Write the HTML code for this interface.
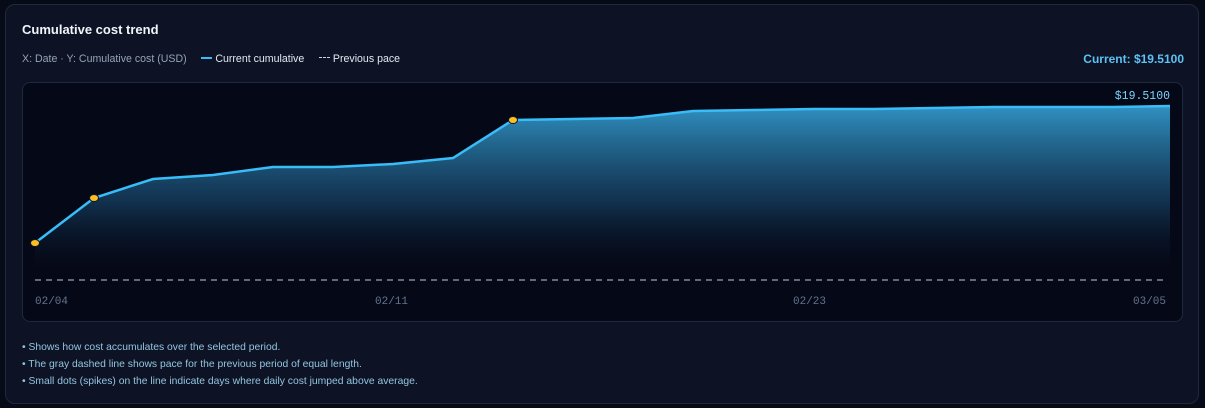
<!DOCTYPE html>
<html><head><meta charset="utf-8"><style>
html,body{margin:0;padding:0;background:#070b18;width:1205px;height:408px;overflow:hidden;font-family:"Liberation Sans",sans-serif}
.card{position:absolute;left:5px;top:4px;width:1192px;height:398px;border:1px solid #1e293b;border-radius:10px;background:#0d1324}
.t{position:absolute;left:16px;top:17px;color:#f1f5f9;font-weight:bold;font-size:13px}
.leg{position:absolute;left:16px;top:48px;color:#94a3b8;font-size:10.6px;white-space:nowrap}
.leg span{color:#e2e8f0}
.cur{position:absolute;right:14px;top:47px;color:#5cc2f5;font-weight:bold;font-size:12px}
.panel{position:absolute;left:22px;top:82px;width:1159px;height:238px;border:1px solid #1e293b;border-radius:8px;background:#050816}
.notes{position:absolute;left:16px;top:334px;color:#93c5e0;font-size:10.35px;line-height:17px}
</style></head><body>
<div class="card">
<div class="t">Cumulative cost trend</div>
<div class="leg">X: Date · Y: Cumulative cost (USD) &nbsp;&nbsp;&nbsp;&nbsp;<b style="display:inline-block;width:11px;height:2px;background:#38bdf8;vertical-align:3px"></b> <span>Current cumulative</span> &nbsp;&nbsp;&nbsp;&nbsp;<b style="display:inline-block;width:11px;border-top:1px dashed #cbd5e1;vertical-align:4px"></b> <span>Previous pace</span></div>
<div class="cur">Current: $19.5100</div>
<div class="notes">• Shows how cost accumulates over the selected period.<br>• The gray dashed line shows pace for the previous period of equal length.<br>• Small dots (spikes) on the line indicate days where daily cost jumped above average.</div>
</div>
<div class="panel"></div>
<svg width="1205" height="408" style="position:absolute;left:0;top:0">
<defs><linearGradient id="g" x1="0" y1="0" x2="0" y2="1"><stop offset="0" stop-color="#38a9e0" stop-opacity=".85"/><stop offset=".55" stop-color="#1a4d74" stop-opacity=".6"/><stop offset="1" stop-color="#050816" stop-opacity="0"/></linearGradient></defs>
<path d="M35,243 L94,198 153,179 213,175 273,167 333,167 393,164 453,158 513,120 573,119 633,118 693,111 753,110 813,109 873,109 933,108 993,107 1053,107 1113,107 1170,106 L1170,280 L35,280Z" fill="url(#g)"/>
<line x1="35" y1="280" x2="1167" y2="280" stroke="#9ca3af" stroke-width="1.3" stroke-dasharray="6,5"/>
<polyline points="35,243 94,198 153,179 213,175 273,167 333,167 393,164 453,158 513,120 573,119 633,118 693,111 753,110 813,109 873,109 933,108 993,107 1053,107 1113,107 1170,106" fill="none" stroke="#38bdf8" stroke-width="2.5"/>
<g fill="#fbbf24" stroke="#0f172a" stroke-width="1"><ellipse cx="35" cy="243" rx="4.5" ry="3.5"/><ellipse cx="94" cy="198" rx="4.5" ry="3.5"/><ellipse cx="513" cy="120" rx="4.5" ry="3.5"/></g>
<g font-family="Liberation Mono,monospace" font-size="11" fill="#64748b"><text x="35" y="304">02/04</text><text x="375" y="304">02/11</text><text x="793" y="304">02/23</text><text x="1133" y="304">03/05</text></g>
<text x="1170" y="99" text-anchor="end" font-family="Liberation Mono,monospace" font-size="11.5" fill="#7dd3fc">$19.5100</text>
</svg>
</body></html>
